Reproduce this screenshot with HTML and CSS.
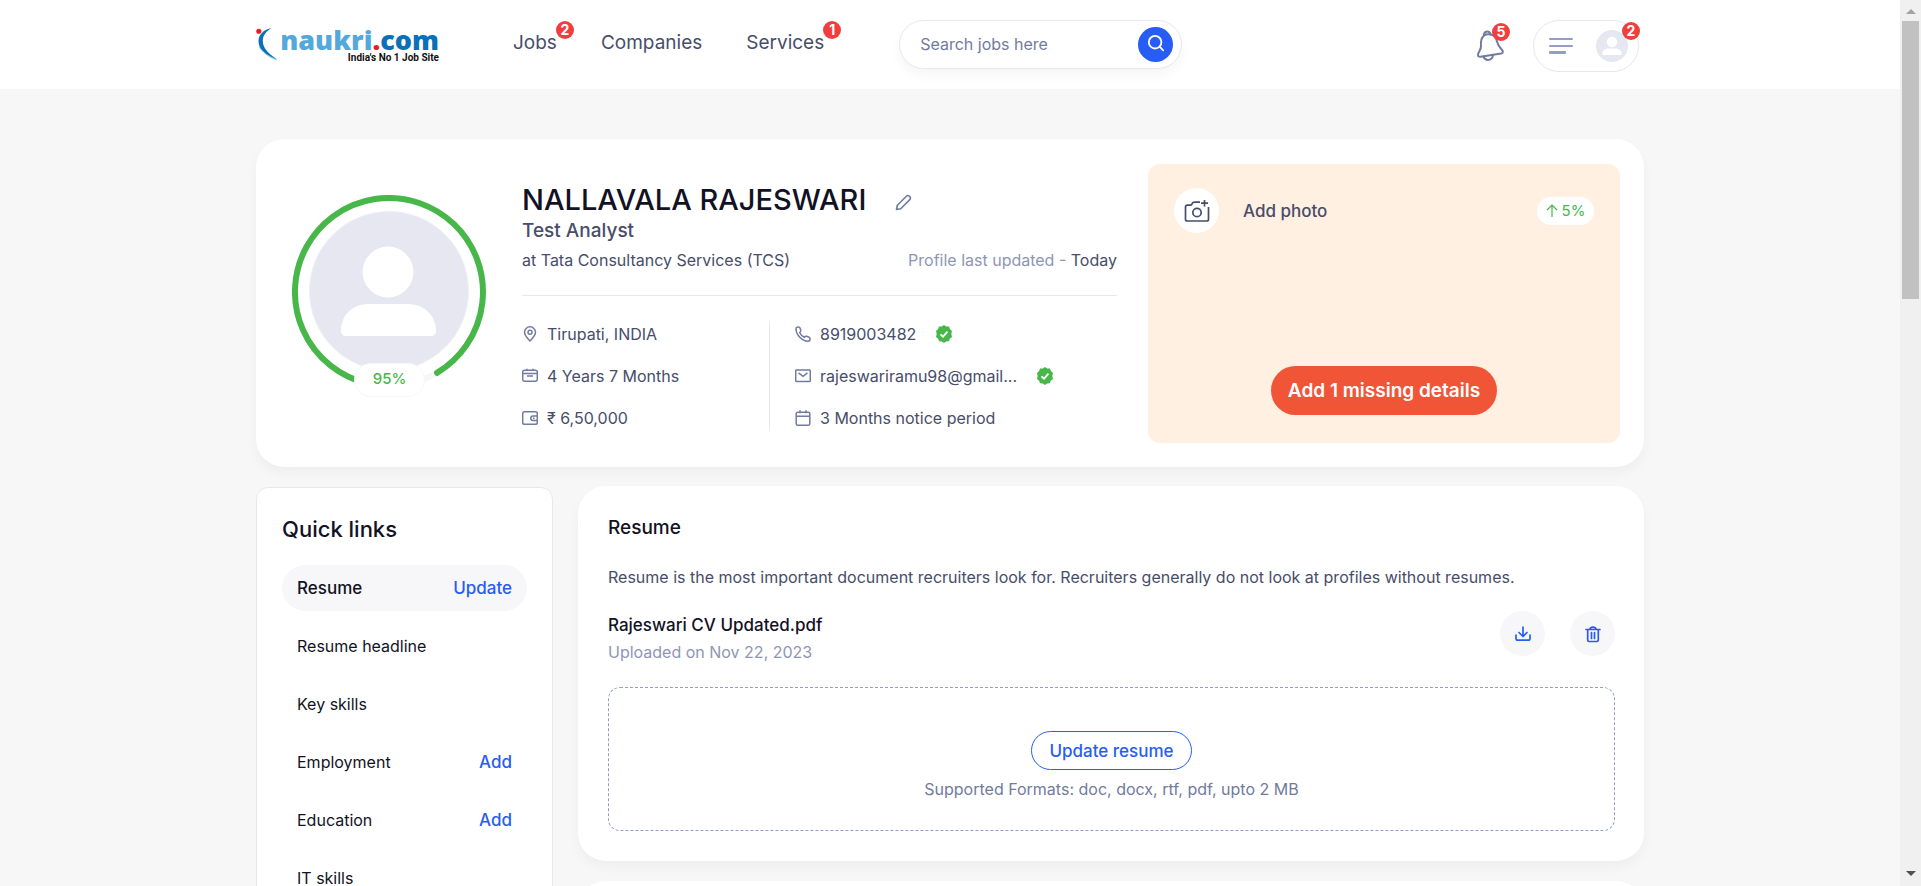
FILE: index.html
```html
<!DOCTYPE html>
<html lang="en">
<head>
<meta charset="utf-8">
<title>Profile | Naukri.com</title>
<link rel="stylesheet" href="styles.css">
</head>
<body>
<div class="viewport">
  <header class="header">
    <div class="container header-row">
      <a class="logo" href="#" aria-label="naukri.com">
        <svg class="logo-mark" viewBox="0 0 23 34" aria-hidden="true">
          <circle cx="2.800" cy="3.500" r="2.700" fill="#ed1c24"/>
          <path d="M16.500 0C8 1.500 2.500 7 2.500 14c0 8 6 14 20 19.500C12.500 27 7 21 7 13.500 7 8 10.500 3.500 16.500 0z" fill="#0a70b8"/>
          <path d="M3.500 20c3.500 6 9 10 18 13.500" fill="none" stroke="#54a9dc" stroke-width="1"/>
        </svg>
        <span class="logo-words">
          <span class="logo-name">naukri<span class="logo-dot">.</span><span class="logo-com">com</span></span>
          <span class="logo-tag">India's No 1 Job Site</span>
        </span>
      </a>
      <nav class="nav">
        <a href="#">Jobs<span class="badge">2</span></a>
        <a href="#">Companies</a>
        <a href="#">Services<span class="badge">1</span></a>
      </nav>
      <form class="search">
        <input type="text" placeholder="Search jobs here" aria-label="Search jobs here">
        <button type="button" class="search-btn" aria-label="Search">
          <svg width="18" height="18" viewBox="0 0 20 20" fill="none" stroke="#fff" stroke-width="2"><circle cx="9" cy="8" r="7"/><path d="M14 13l4 4" stroke-linecap="round"/></svg>
        </button>
      </form>
      <div class="tools">
        <button type="button" class="bell" aria-label="Notifications">
          <svg width="30" height="32" viewBox="0 0 30 32" fill="none" stroke="#717b9e" stroke-width="2" stroke-linejoin="round" stroke-linecap="round"><path d="M8 5.500C5 8 4.500 11 5 16c.3 4-3 6-3 9 0 1.500 1 2 2.500 1.800L25 23.500c2-.4 2.500-2 1-3.500-3-3-4-4-5-8.500C20 7 18 5 15 4.500c-2.500-.4-5-.4-7 1z"/><path d="M8 5C8 1 14 0 14.500 4.500M7.500 26.500c1.500 5 9 4.500 9.500-1.500"/></svg>
          <span class="badge">5</span>
        </button>
        <button type="button" class="menu" aria-label="Account menu">
          <svg width="24" height="17" viewBox="0 0 24 17" fill="#959dc6"><rect width="24" height="2" rx="1"/><rect y="7" width="24" height="2" rx="1"/><rect y="13" width="17" height="3" rx="1"/></svg>
          <svg width="32" height="32" viewBox="0 0 160 160"><circle cx="80" cy="80" r="80" fill="#e7e7f1"/><circle cx="80" cy="60" r="26" fill="#fff"/><path d="M61 93h38c18 0 29 12 29 27 0 3-2 5-5 5H37c-3 0-5-2-5-5 0-15 11-27 29-27z" fill="#fff"/></svg>
          <span class="badge">2</span>
        </button>
      </div>
    </div>
  </header>

  <main class="container main">
    <section class="card profile">
      <div class="progress">
        <svg viewBox="0 0 194 194" aria-hidden="true">
          <circle cx="97" cy="97" r="94" fill="none" stroke="#f7f7f9" stroke-width="6"/>
          <path d="M75 188.400A94 94 0 1 1 145 177.800" fill="none" stroke="#47b749" stroke-width="6" stroke-linecap="round"/>
          <circle cx="97" cy="96" r="79.500" fill="#e7e7f1" stroke="#f0f0f4"/>
          <circle cx="96" cy="77" r="25.500" fill="#fff"/>
          <path d="M77 109h38c18 0 29 12 29 27 0 3-2 5-5 5H54c-3 0-5-2-5-5 0-15 10-27 28-27z" fill="#fff"/>
        </svg>
        <span class="progress-value">95%</span>
      </div>

      <div class="info">
        <div class="name-row">
          <h1>NALLAVALA RAJESWARI</h1>
          <button type="button" class="plain" aria-label="Edit profile">
            <svg width="17" height="17" viewBox="0 0 17 17" fill="none" stroke="#717b9e" stroke-width="1.600" stroke-linejoin="round"><path d="M1.500 15.500l.8-4.200L11.400 2.200a2.100 2.100 0 0 1 3 0l.4.4a2.100 2.100 0 0 1 0 3L5.700 14.700z"/></svg>
          </button>
        </div>
        <p class="role">Test Analyst</p>
        <div class="company-row">
          <span>at Tata Consultancy Services (TCS)</span>
          <span><span class="muted">Profile last updated - </span>Today</span>
        </div>
        <div class="facts">
          <ul class="fact-list">
            <li><svg class="ico" viewBox="0 0 16 16"><path d="M8 15C5 12 2.500 9.500 2.500 6.300a5.500 5.500 0 0 1 11 0C13.500 9.500 11 12 8 15z"/><circle cx="8" cy="6.300" r="2"/></svg>Tirupati, INDIA</li>
            <li><svg class="ico" viewBox="0 0 16 16"><rect x=".7" y="2.200" width="14.600" height="11" rx="1.800"/><path d="M.7 5.500h14.600M5 2.200V.8M11 2.200V.8M5 8h6"/></svg>4 Years 7 Months</li>
            <li><svg class="ico" viewBox="0 0 16 16"><rect x=".7" y="1.700" width="14.600" height="12.600" rx="1.800"/><path d="M15.300 6H11a2 2 0 0 0 0 4.500h4.300M11 8.200h1.500"/></svg>₹ 6,50,000</li>
          </ul>
          <ul class="fact-list fact-list-right">
            <li><svg class="ico" viewBox="0 0 16 16"><path d="M1 2.500C1 1.500 2 .9 3.200.9c1.100 0 1.700.3 2 1.400l.6 2c.3 1-.2 1.500-1.100 2.200.8 2 2.500 3.800 4.700 4.800.7-1 1.300-1.300 2.200-1l2 .7c1 .3 1.500 1 1.500 2 0 1.300-.8 2.200-2 2.200C7 15 1 9 1 2.500z"/></svg>8919003482<svg class="verified" viewBox="0 0 18 18"><path d="M9 0l2.200 1.500L14 1.600l.9 2.500L17 6l-.7 2.800L17 12l-2.200 1.700-1 2.600-2.700.1L9 18l-2.200-1.600-2.700-.1-1-2.600L1 12l.7-3L1 6l2.100-1.900L4 1.600l2.800-.1z" fill="#47b749"/><path d="M5.500 9.300L8 11.700l4.500-5" fill="none" stroke="#fff" stroke-width="1.800"/></svg></li>
            <li><svg class="ico" viewBox="0 0 16 16"><rect x=".7" y="2" width="14.600" height="11.500" rx="1"/><path d="M3.500 4.800L8 8.300l4.500-3.500"/></svg><span class="email">rajeswariramu98@gmail...</span><svg class="verified" viewBox="0 0 18 18"><path d="M9 0l2.200 1.500L14 1.600l.9 2.500L17 6l-.7 2.800L17 12l-2.200 1.700-1 2.600-2.700.1L9 18l-2.200-1.600-2.700-.1-1-2.600L1 12l.7-3L1 6l2.100-1.900L4 1.600l2.800-.1z" fill="#47b749"/><path d="M5.500 9.300L8 11.700l4.500-5" fill="none" stroke="#fff" stroke-width="1.800"/></svg></li>
            <li><svg class="ico" viewBox="0 0 16 16"><rect x="1.200" y="2.200" width="13.600" height="13" rx="1.500"/><path d="M1.200 6.200h13.600M5 .3v3M11 .3v3"/></svg>3 Months notice period</li>
          </ul>
        </div>
      </div>

      <aside class="missing">
        <div class="missing-row">
          <span class="photo-icon"><svg width="26" height="24" viewBox="0 0 26 24" fill="none" stroke="#474d6a" stroke-width="1.700"><path d="M16 3.200h-5.500c-1.500 0-2 .5-2.500 1.700-.3.900-.8 1.300-1.800 1.300H3.500C2.300 6.200 1.500 7 1.500 8v12.200c0 1 .8 1.800 1.800 1.800h19.400c1 0 1.800-.8 1.800-1.800V8M20.500 1v6.500M17 4.200h7"/><circle cx="13" cy="13.500" r="4.200"/></svg></span>
          <span class="missing-name">Add photo</span>
          <span class="boost"><svg width="12" height="13" viewBox="0 0 12 13" fill="none" stroke="#47b749" stroke-width="1.200"><path d="M6 13V1M1 6l5-5 5 5"/></svg>5%</span>
        </div>
        <button type="button" class="missing-btn">Add 1 missing details</button>
      </aside>
    </section>

    <div class="columns">
      <nav class="card quick">
        <h2>Quick links</h2>
        <ul>
          <li class="active"><a href="#">Resume</a><a class="action" href="#">Update</a></li>
          <li><a href="#">Resume headline</a></li>
          <li><a href="#">Key skills</a></li>
          <li><a href="#">Employment</a><a class="action" href="#">Add</a></li>
          <li><a href="#">Education</a><a class="action" href="#">Add</a></li>
          <li><a href="#">IT skills</a></li>
        </ul>
      </nav>
      <div class="sections">
        <section class="card resume">
          <h2>Resume</h2>
          <p class="lead">Resume is the most important document recruiters look for. Recruiters generally do not look at profiles without resumes.</p>
          <div class="file">
            <div class="file-text">
              <p class="file-name">Rajeswari CV Updated.pdf</p>
              <p class="file-date">Uploaded on Nov 22, 2023</p>
            </div>
            <button type="button" class="round" aria-label="Download resume"><svg width="18" height="18" viewBox="0 0 18 18"><path d="M9 2v9M5 7.500l4 4 4-4M2 10v3.500c0 1 .8 1.700 1.800 1.700h10.400c1 0 1.800-.7 1.800-1.700V10"/></svg></button>
            <button type="button" class="round" aria-label="Delete resume"><svg width="18" height="18" viewBox="0 0 18 18"><path d="M2 4.500h14M6 4C6.500 1.500 11.500 1.500 12 4M3.700 4.500v10.700c0 .8.600 1.300 1.300 1.300h8c.7 0 1.300-.5 1.300-1.300V4.500M7.500 7.500v6M10.500 7.500v6"/></svg></button>
          </div>
          <div class="drop">
            <button type="button" class="update-btn">Update resume</button>
            <p>Supported Formats: doc, docx, rtf, pdf, upto 2 MB</p>
          </div>
        </section>
        <section class="card next"></section>
      </div>
    </div>
  </main>
</div>
<div class="scrollbar" aria-hidden="true">
  <svg class="arrow" width="10" height="5" viewBox="0 0 10 5"><path d="M0 5l5-5 5 5z" fill="#a3a3a3"/></svg>
  <div class="track"><div class="thumb"></div></div>
  <svg class="arrow" width="10" height="5" viewBox="0 0 10 5"><path d="M0 0l5 5 5-5z" fill="#505050"/></svg>
</div>
</body>
</html>
```
FILE: styles.css
```css
* { box-sizing: border-box; }

body {
  margin: 0;
  height: 100vh;
  display: flex;
  overflow: hidden;
  background: #f7f7f7;
  color: #474d6a;
  font: 16px/24px Inter, "Noto Sans", sans-serif;
}

h1, h2, p, ul { margin: 0; padding: 0; }
ul { list-style: none; }
a { color: inherit; text-decoration: none; }
button { font: inherit; border: 0; padding: 0; background: none; cursor: pointer; }

.viewport { flex: 1; min-width: 0; overflow: hidden; }
.container { width: 100%; max-width: 1388px; margin: 0 auto; }

/* Header */
.header { background: #fff; padding: 16px 0 17px; }
.header-row { display: flex; align-items: center; height: 56px; }

.logo { display: flex; width: 183px; padding-top: 3px; }
.logo-mark { width: 22px; height: 32px; }
.logo-words { flex: 1; display: flex; flex-direction: column; align-items: flex-end; }
.logo-name { font: 800 27px/24px "Open Sans", sans-serif; color: #54a9dc; }
.logo-dot { color: #ed1c24; }
.logo-com { color: #0a70b8; }
.logo-tag { font: 700 10px/11px Roboto, sans-serif; color: #111; white-space: nowrap; }

.nav { display: flex; gap: 44px; margin-left: 74px; padding-bottom: 2px; font-size: 19px; }
.nav a { position: relative; }

.badge {
  position: absolute;
  width: 18px;
  height: 18px;
  border-radius: 50%;
  background: #f03e3e;
  color: #fff;
  font-size: 14px;
  font-weight: 700;
  line-height: 18px;
  text-align: center;
}
.nav .badge { left: 100%; top: -10px; margin-left: -1px; }

.search {
  display: flex;
  align-items: center;
  width: 283px;
  height: 49px;
  margin-left: 75px;
  padding: 0 8px 0 20px;
  border: 1px solid #e7e7f1;
  border-radius: 25px;
  background: #fff;
  box-shadow: 0 6px 12px rgba(30, 10, 58, 0.04);
}
.search input {
  flex: 1;
  min-width: 0;
  padding: 0;
  border: 0;
  outline: 0;
  background: none;
  font: inherit;
  color: #474d6a;
}
.search input::placeholder { color: #717b9e; opacity: 1; }
.search-btn {
  display: grid;
  place-items: center;
  width: 35px;
  height: 35px;
  border-radius: 50%;
  background: #275df5;
}

.tools { display: flex; align-items: center; gap: 27px; margin-left: auto; padding: 4px 5px 0 0; }
.bell { position: relative; display: block; height: 32px; }
.bell svg { display: block; }
.bell .badge { left: 16px; top: -7px; }
.menu {
  position: relative;
  display: flex;
  align-items: center;
  justify-content: space-between;
  width: 106px;
  height: 52px;
  padding: 0 10px 0 15px;
  border: 1px solid #e7e7f1;
  border-radius: 26px;
}
.menu .badge { right: -2px; top: 1px; }

/* Cards */
.main { padding-top: 50px; }
.card { background: #fff; border-radius: 28px; box-shadow: 0 6px 12px rgba(30, 10, 58, 0.04); }

/* Profile summary */
.profile { display: flex; padding: 25px 24px 24px 36px; }

.progress { position: relative; flex: none; width: 194px; height: 194px; margin: 31px 36px 0 0; }
.progress > svg { display: block; width: 100%; }
.progress-value {
  position: absolute;
  left: 62px;
  bottom: -8px;
  width: 71px;
  height: 34px;
  border: 1px solid #f7f7f9;
  border-radius: 17px;
  background: #fff;
  color: #47b749;
  font-size: 15px;
  font-weight: 500;
  line-height: 30px;
  text-align: center;
}

.info { flex: 1; min-width: 0; padding-top: 18px; }
.name-row { display: flex; align-items: center; gap: 29px; height: 36px; }
.name-row h1 { font-size: 29px; font-weight: 500; line-height: 36px; color: #121224; }
.plain { display: block; line-height: 0; padding-top: 5px; }
.role { font-size: 19px; font-weight: 500; line-height: 26px; }
.company-row {
  display: flex;
  justify-content: space-between;
  padding: 4px 0 23px;
  border-bottom: 1px solid #e7e7f1;
}
.muted { color: #8d96b3; }

.facts { display: flex; padding-top: 26px; }
.fact-list { flex: 0 0 247px; display: grid; gap: 18px; }
.fact-list-right { flex: 1; border-left: 1px solid #e7e7f1; padding-left: 25px; }
.fact-list li { display: flex; align-items: center; }
.ico {
  width: 16px;
  height: 16px;
  margin-right: 9px;
  fill: none;
  stroke: #717b9e;
  stroke-width: 1.5;
}
.verified { width: 18px; height: 18px; margin-left: 19px; }

.missing {
  flex: none;
  display: flex;
  flex-direction: column;
  align-items: center;
  justify-content: space-between;
  width: 472px;
  min-height: 279px;
  margin-left: 31px;
  padding: 24px 26px 28px;
  border-radius: 12px;
  background: #fff0e1;
}
.missing-row { display: flex; align-items: center; align-self: stretch; }
.photo-icon {
  display: grid;
  place-items: center;
  width: 45px;
  height: 45px;
  border-radius: 50%;
  background: #fff;
}
.missing-name { flex: 1; margin-left: 24px; font-size: 17px; font-weight: 500; }
.boost {
  display: flex;
  align-items: center;
  justify-content: center;
  gap: 4px;
  width: 57px;
  height: 28px;
  border-radius: 14px;
  background: #fff;
  color: #47b749;
  font-size: 15px;
}
.missing-btn {
  height: 49px;
  padding: 0 17px;
  border-radius: 25px;
  background: #f05537;
  color: #fff;
  font-size: 19px;
  font-weight: 600;
}

/* Quick links and sections */
.columns { display: flex; align-items: flex-start; gap: 25px; padding-top: 19px; }

.quick {
  flex: none;
  width: 297px;
  height: 480px;
  margin-top: 1px;
  padding: 25px 25px 0;
  border: 1px solid #e7e7f1;
  border-radius: 12px;
  box-shadow: none;
}
.quick h2 { font-size: 22px; font-weight: 500; line-height: 32px; color: #121224; }
.quick ul { display: grid; gap: 12px; padding-top: 20px; }
.quick li {
  display: flex;
  align-items: center;
  justify-content: space-between;
  height: 46px;
  padding: 0 15px;
  border-radius: 23px;
  color: #121224;
}
.quick .active { background: #f7f7f9; font-size: 17px; font-weight: 500; }
.quick .action { color: #275df5; font-size: 17px; font-weight: 500; }

.sections { flex: 1; min-width: 0; display: grid; gap: 20px; }
.resume { padding: 30px 29px 30px 30px; }
.resume h2 { font-size: 19px; font-weight: 500; line-height: 24px; color: #121224; }
.lead { padding-top: 25px; }
.file { display: flex; align-items: flex-start; gap: 25px; padding-top: 22px; }
.file-text { flex: 1; }
.file-name { font-size: 17px; line-height: 28px; font-weight: 500; color: #121224; }
.file-date { line-height: 27px; color: #8d96b3; }
.round {
  display: grid;
  place-items: center;
  width: 45px;
  height: 45px;
  border-radius: 50%;
  background: #f7f7f9;
}
.round svg { fill: none; stroke: #275df5; stroke-width: 1.7; stroke-linecap: round; stroke-linejoin: round; }
.drop {
  display: flex;
  flex-direction: column;
  align-items: center;
  margin-top: 21px;
  padding: 43px 0 29px;
  border: 1px dashed #959dc6;
  border-radius: 12px;
  color: #717b9e;
}
.update-btn {
  height: 39px;
  margin-bottom: 7px;
  padding: 0 17px;
  border: 1px solid #275df5;
  border-radius: 20px;
  color: #275df5;
  font-size: 17px;
  font-weight: 500;
}
.next { height: 200px; }

/* Scrollbar */
.scrollbar {
  display: flex;
  flex-direction: column;
  align-items: center;
  width: 21px;
  padding: 9px 2px 10px;
  background: #f0f0f0;
}
.arrow { flex: none; }
.track { flex: 1; width: 17px; padding: 7px 0; }
.thumb { height: 33%; background: #c1c1c1; }
```
